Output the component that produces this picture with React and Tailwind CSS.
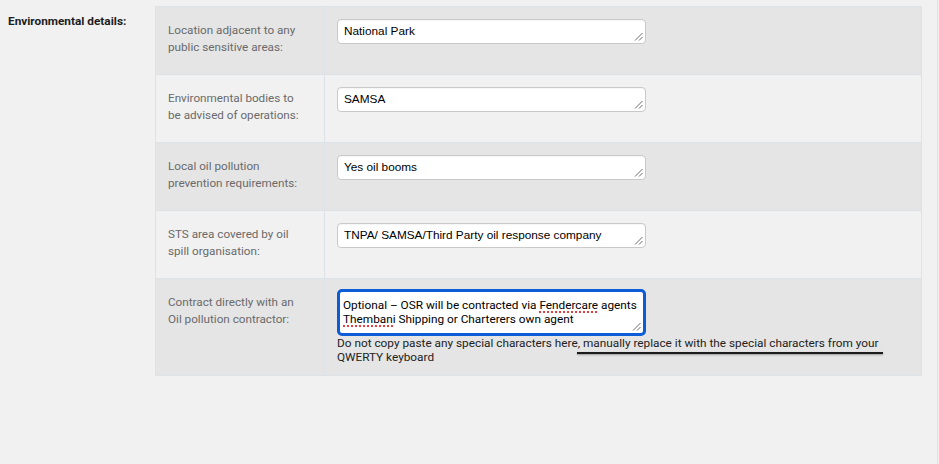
import React from 'react';

const rows = [
  { label: ['Location adjacent to any', 'public sensitive areas:'], value: 'National Park', shade: true },
  { label: ['Environmental bodies to', 'be advised of operations:'], value: 'SAMSA', shade: false },
  { label: ['Local oil pollution', 'prevention requirements:'], value: 'Yes oil booms', shade: true },
  { label: ['STS area covered by oil', 'spill organisation:'], value: 'TNPA/ SAMSA/Third Party oil response company', shade: false },
];

const ResizeGrip = () => (
  <svg width="9" height="9" viewBox="0 0 9 9" className="absolute bottom-[2px] right-[2px]">
    <path d="M8.5 1 L1 8.5 M8.5 5 L5 8.5" stroke="#6b6b6b" strokeWidth="1" fill="none" />
  </svg>
);

const Field = ({ value }) => (
  <div className="relative h-[25px] w-[309px] rounded-[4px] border border-[#c9c9c9] bg-white px-[6px] pt-[4px] text-[11.8px] leading-[15px] text-black font-['Liberation_Sans',Arial,sans-serif] shadow-[inset_0_1px_1px_rgba(0,0,0,0.04)]">
    {value}
    <ResizeGrip />
  </div>
);

const Label = ({ lines }) => (
  <div className="w-[169px] shrink-0 border-r border-[#dde2e7] pl-3 pt-[15px] text-[11.7px] leading-[17px] text-[#6a6a6a]">
    {lines.map((l) => (
      <div key={l}>{l}</div>
    ))}
  </div>
);

const Squiggle = ({ children }) => (
  <span className="underline decoration-dotted decoration-[#e04040] decoration-[1.5px] underline-offset-[2px]">{children}</span>
);

export default function App() {
  return (
    <div className="flex h-[464px] w-[939px] bg-[#f1f1f1] font-['Roboto',sans-serif]">
      <div className="flex flex-1">
        <div className="w-[155px] shrink-0 pl-2 pt-[14px] text-[11.8px] font-bold leading-[15px] text-[#1d1d1d]">
          Environmental details:
        </div>

        <div className="mt-[6px] self-start w-[767px] border border-[#dde2e7]">
          {rows.map((r) => (
            <div
              key={r.value}
              className={`flex h-[68px] border-b border-[#dde2e7] ${r.shade ? 'bg-[#e5e5e5]' : 'bg-[#f1f1f1]'}`}
            >
              <Label lines={r.label} />
              <div className="pl-3 pt-[12px]">
                <Field value={r.value} />
              </div>
            </div>
          ))}

          <div className="flex h-[96px] bg-[#e5e5e5]">
            <Label lines={['Contract directly with an', 'Oil pollution contractor:']} />
            <div className="pl-3 pt-[10px]">
              <div className="relative h-[47px] w-[309px] whitespace-nowrap rounded-[5px] border-[3px] border-[#0b5cd5] bg-white px-[3px] pt-[6px] text-[11.8px] leading-[14px] text-black">
                <div>
                  Optional – OSR will be contracted via <Squiggle>Fendercare</Squiggle> agents
                </div>
                <div>
                  <Squiggle>Thembani</Squiggle> Shipping or Charterers own agent
                </div>
                <ResizeGrip />
              </div>
              <div className="relative mt-0 w-[560px] text-[11.8px] leading-[14px] text-[#222]">
                <div>
                  Do not copy paste any special characters here, manually replace it with the special characters from your
                </div>
                <div>QWERTY keyboard</div>
                <div className="absolute left-[240px] top-[16px] h-[2px] w-[306px] bg-[#1c1c1c] shadow-[0_1px_2px_rgba(0,0,0,0.35)]" />
              </div>
            </div>
          </div>
        </div>
      </div>
      <div className="w-px bg-[#dedede]" />
      <div className="w-[1px]" />
    </div>
  );
}
